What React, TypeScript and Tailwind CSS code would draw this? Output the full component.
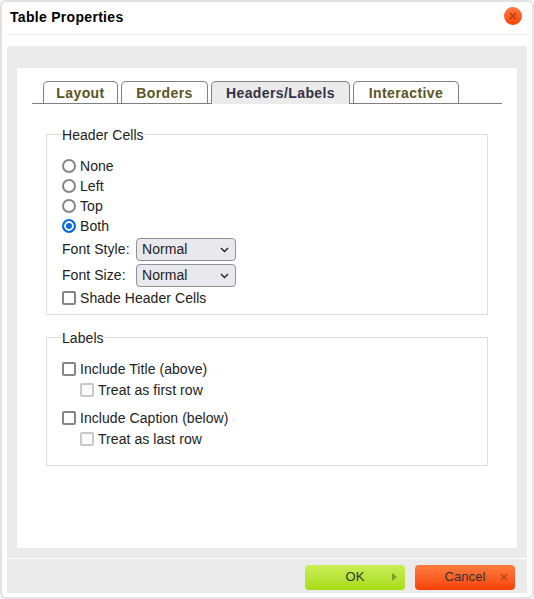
import React from "react";

function Tab({ label, active, width }: { label: string; active?: boolean; width: string }) {
    return (
        <div
            className={`${width} flex items-center justify-center rounded-t-[5px] border border-b-0 border-[#808080] text-sm font-bold tracking-[0.4px] ${
                active ? "h-[23px] bg-[#ebebeb] text-[#333344]" : "h-[22px] bg-white text-[#5c5424]"
            }`}
        >
            {label}
        </div>
    );
}

function Radio({ label, checked }: { label: string; checked?: boolean }) {
    return (
        <label className="h-5 flex items-center gap-[4px]">
            <input
                type="radio"
                name="header"
                defaultChecked={checked}
                className="appearance-none w-3.5 h-3.5 m-0 rounded-full border-2 border-[#85858f] checked:border-[#0b6bda] checked:bg-[#0b6bda] checked:shadow-[inset_0_0_0_2px_white]"
            />
            {label}
        </label>
    );
}

function Check({ label, sub, className }: { label: string; sub?: boolean; className?: string }) {
    return (
        <label className={`h-5 flex items-center gap-[4px] ${sub ? "ml-[18px]" : ""} ${className ?? ""}`}>
            <input
                type="checkbox"
                disabled={sub}
                className={`appearance-none w-3.5 h-3.5 m-0 rounded-[2px] border-2 ${
                    sub ? "border-[#c9c9c9] bg-[#fafafa]" : "border-[#85858f]"
                }`}
            />
            {label}
        </label>
    );
}

function FontRow({ label }: { label: string }) {
    return (
        <div className="flex items-center h-[26px]">
            <span className="w-[74px]">{label}</span>
            <div className="relative w-[100px] h-[23px]">
                <select className="appearance-none w-full h-full pl-[5px] bg-[#e9e9ed] border border-[#8f8f9d] rounded-[4px]">
                    <option>Normal</option>
                </select>
                <svg className="absolute right-[7px] top-[9px]" width="9" height="6" viewBox="0 0 9 6" fill="none" stroke="#222" strokeWidth="1.4">
                    <path d="M1 1l3.5 3.5L8 1" />
                </svg>
            </div>
        </div>
    );
}

export default function App() {
    return (
        <div className="w-[534px] h-[599px] flex flex-col bg-white border-2 border-[#e2e2e2] rounded-[6px] text-sm tracking-[0.06px] text-[#222] font-['Liberation_Sans',Arial,sans-serif]">
            <div className="h-[33px] mx-[4px] shrink-0 flex items-start justify-between pl-[4px] pr-[6px] border-b border-[#f0f0f0]">
                <span className="mt-[5px] font-bold text-black tracking-[0.3px]">Table Properties</span>
                <div className="mt-[5px] w-[18px] h-[18px] rounded-full bg-gradient-to-b from-[#ff7a3c] to-[#f74000] flex items-center justify-center text-[#b03a10]">
                    <svg width="8" height="8" viewBox="0 0 8 8" fill="none" stroke="currentColor" strokeWidth="1.4">
                        <path d="M1 1l6 6M7 1l-6 6" />
                    </svg>
                </div>
            </div>

            <div className="mt-[11px] mx-[5px] flex-1 flex flex-col bg-[#ebebeb] rounded-t-[2px]">
                <div className="mt-[22px] mx-[10px] h-[480px] bg-white px-[15px] pt-[13px]">
                    <div className="flex items-start gap-[3px] pl-[11px] border-b border-[#808080] h-[23px]">
                        <Tab label="Layout" width="w-[75px]" />
                        <Tab label="Borders" width="w-[87px]" />
                        <Tab label="Headers/Labels" width="w-[139px]" active />
                        <Tab label="Interactive" width="w-[106px]" />
                    </div>

                    <fieldset className="mt-[20px] mx-[14px] h-[191px] border border-[#dddddd] px-[15px] pt-[12px]">
                        <legend className="px-0 pr-[1px] translate-y-px">Header Cells</legend>
                        <Radio label="None" />
                        <Radio label="Left" />
                        <Radio label="Top" />
                        <Radio label="Both" checked />
                        <FontRow label="Font Style:" />
                        <FontRow label="Font Size:" />
                        <Check label="Shade Header Cells" />
                    </fieldset>

                    <fieldset className="mt-[12px] mx-[14px] h-[139px] border border-[#dddddd] px-[15px] pt-[12px]">
                        <legend className="px-0 pr-[1px] translate-y-px">Labels</legend>
                        <Check label="Include Title (above)" />
                        <Check label="Treat as first row" sub className="mt-[1px]" />
                        <Check label="Include Caption (below)" className="mt-[8px]" />
                        <Check label="Treat as last row" sub className="mt-[1px]" />
                    </fieldset>
                </div>

                <div className="mt-[10px] border-t border-white flex-1 flex items-center justify-end gap-[10px] pr-[12px] pt-[2px]">
                    <button className="relative w-[100px] h-[25px] rounded-[4px] bg-gradient-to-b from-[#c8ee55] to-[#a8dc0c] text-[13px] text-[#333]">
                        OK
                        <svg className="absolute right-[8px] top-[8px]" width="5" height="8" viewBox="0 0 5 8">
                            <path d="M0 0l5 4-5 4z" fill="#7f9a2c" />
                        </svg>
                    </button>
                    <button className="relative w-[100px] h-[25px] rounded-[4px] bg-gradient-to-b from-[#ff7a3c] to-[#f74000] text-[13px] text-[#333]">
                        Cancel
                        <svg className="absolute right-[7px] top-[8px]" width="8" height="8" viewBox="0 0 8 8" fill="none" stroke="#b04a1c" strokeWidth="1.5">
                            <path d="M1 1l6 6M7 1l-6 6" />
                        </svg>
                    </button>
                </div>
            </div>
            <div className="h-[4px] shrink-0" />
        </div>
    );
}
